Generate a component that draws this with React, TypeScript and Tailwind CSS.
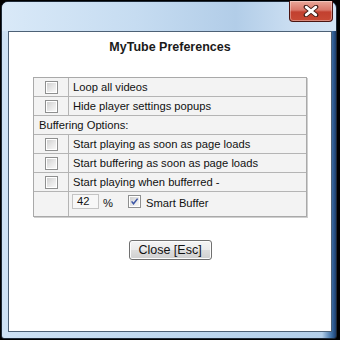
import React from "react";

function Box({ checked = false }: { checked?: boolean }) {
  return (
    <span className="flex h-[13px] w-[13px] shrink-0 items-center justify-center border border-[#8e8f8f] bg-white p-[1px]">
      <span className="relative flex h-full w-full items-center justify-center bg-[linear-gradient(135deg,#cfcfcf_0%,#e6e6e6_50%,#f8f8f8_100%)]">
        {checked && (
          <svg width="9" height="9" viewBox="0 0 9 9" className="absolute">
            <path d="M1.6 4.4 L3.5 6.8 L7.6 1.6" fill="none" stroke="#3b55a6" strokeWidth="1.5" />
          </svg>
        )}
      </span>
    </span>
  );
}

function Row({ label }: { label: string }) {
  return (
    <div className="flex h-[19px] border-b border-[#b4b4b4]">
      <div className="flex w-[35px] items-center justify-center border-r border-[#b4b4b4] pl-[1px]">
        <Box />
      </div>
      <div className="flex items-center pl-[4px]">{label}</div>
    </div>
  );
}

export default function App() {
  return (
    <div
      className="h-[340px] w-[340px] overflow-hidden bg-black pt-[1px] pl-[1px]"
      style={{ fontFamily: '"Liberation Sans", Arial, sans-serif' }}
    >
      <div className="relative h-[338px] w-[336px] rounded-t-[7px] rounded-b-[3px] border border-[#1e2a38] bg-[linear-gradient(to_right,#cde1f4_0px,#bcd6ee_200px,#b3cfea_320px,#3a6ca3_330px,#1d3f6e_334px)] pt-[29px] pr-[4px] pb-[6px] pl-[6px]">
        <div className="pointer-events-none absolute left-0 top-0 h-[29px] w-full rounded-t-[6px] bg-[linear-gradient(to_right,#d9e9f8_0%,#c6dcf1_40%,#b2cde8_70%,#c9ddf1_86%,#d3e4f4_100%)]" />
        <div className="absolute right-[3px] top-[-1px] flex h-[21px] w-[44px] items-center justify-center rounded-b-[4px] border border-t-0 border-[#4a1410] bg-[linear-gradient(to_bottom,#e9a89a_0%,#d9786a_45%,#c2402f_55%,#c84a35_100%)] shadow-[inset_0_0_0_1px_rgba(255,255,255,0.35)]">
          <svg width="16" height="12" viewBox="0 0 16 12">
            <path d="M3 2 L13 10 M13 2 L3 10" stroke="#3b1a14" strokeWidth="4.6" strokeLinecap="round" />
            <path d="M3.2 2.2 L12.8 9.8 M12.8 2.2 L3.2 9.8" stroke="#ffffff" strokeWidth="2.8" strokeLinecap="round" />
          </svg>
        </div>
        <div className="relative h-full w-full border border-[#4d6176] bg-white text-[11.2px] text-[#111]">
          <div className="pt-[8px] text-center text-[12.5px] font-bold leading-[15px] text-[#1a1a1a]">
            MyTube Preferences
          </div>
          <div className="ml-[24px] mt-[22px] w-[274px] border border-[#a9a9a9] bg-[#f3f3f3] shadow-[1px_1px_0_#cfcfcf]">
            <Row label="Loop all videos" />
            <Row label="Hide player settings popups" />
            <div className="flex h-[19px] items-center border-b border-[#b4b4b4] pl-[5px]">
              Buffering Options:
            </div>
            <Row label="Start playing as soon as page loads" />
            <Row label="Start buffering as soon as page loads" />
            <Row label="Start playing when bufferred -" />
            <div className="flex h-[24px]">
              <div className="w-[35px] border-r border-[#b4b4b4]" />
              <div className="flex items-start pl-[3px] pt-[2px]">
                <div className="flex h-[15px] w-[27px] items-center border border-[#c4c4c4] bg-[#f7f7f7] pl-[4px]">
                  42
                </div>
                <span className="ml-[4px] mt-[1px]">%</span>
                <span className="ml-[15px] mt-[1px]">
                  <Box checked />
                </span>
                <span className="ml-[5px] mt-[1px]">Smart Buffer</span>
              </div>
            </div>
          </div>
          <div className="mt-[23px] flex justify-center">
            <button className="flex h-[20px] w-[83px] items-center justify-center rounded-[3px] border border-[#707070] bg-[linear-gradient(to_bottom,#f4f4f4_0%,#ebebeb_50%,#dddddd_51%,#cfcfcf_100%)] text-[12.5px] text-[#111] shadow-[inset_0_0_0_1px_#fcfcfc]">
              Close [Esc]
            </button>
          </div>
        </div>
      </div>
    </div>
  );
}
